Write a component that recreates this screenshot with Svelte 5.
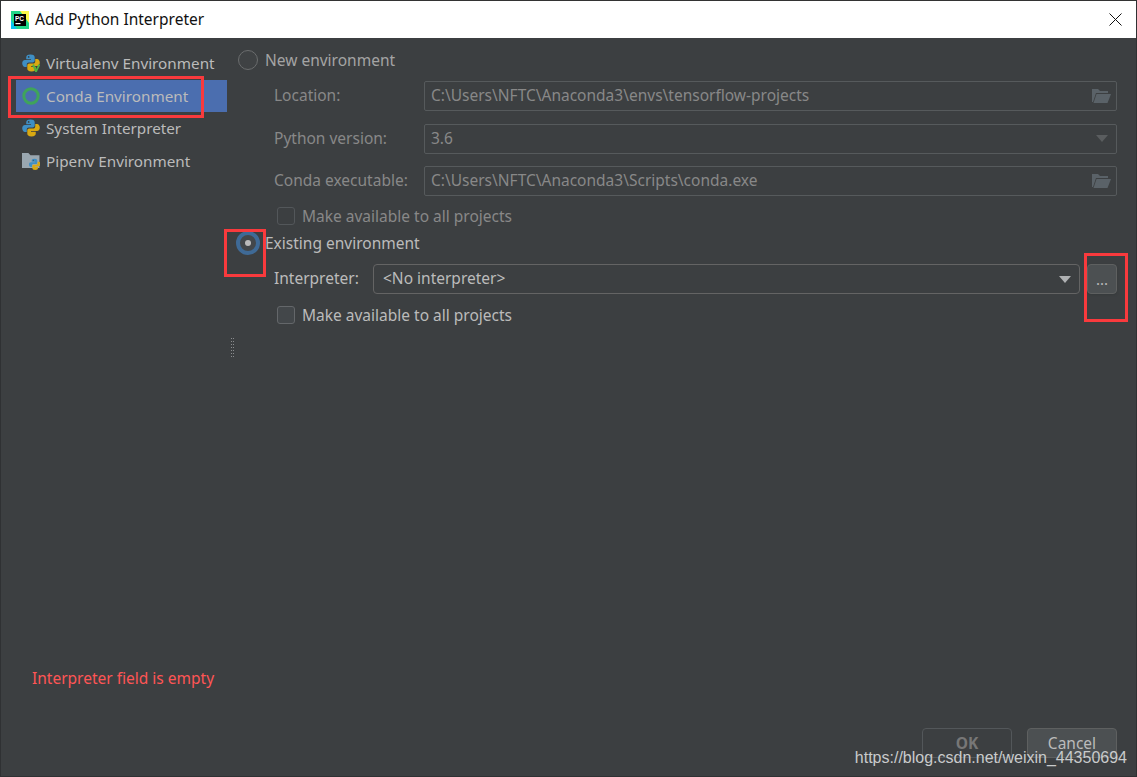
<script>
  const envs = [
    { name: 'Virtualenv Environment', icon: 'venv' },
    { name: 'Conda Environment', icon: 'conda' },
    { name: 'System Interpreter', icon: 'python' },
    { name: 'Pipenv Environment', icon: 'pipenv' }
  ];
  const fields = [
    { label: 'Location:', value: 'C:\\Users\\NFTC\\Anaconda3\\envs\\tensorflow-projects', kind: 'folder' },
    { label: 'Python version:', value: '3.6', kind: 'select' },
    { label: 'Conda executable:', value: 'C:\\Users\\NFTC\\Anaconda3\\Scripts\\conda.exe', kind: 'folder' }
  ];
</script>

{#snippet snake()}
  <path d="M8 .5C5 .5 4 1.7 4 3.3V5H8.5V5.7H2.8C1.2 5.7 .2 7 .2 8.7S1.2 12.2 2.8 12.2H4.5V10C4.5 8.8 5.3 8 6.5 8H10C11.2 8 12 7.2 12 6.2V3.3C12 1.7 11 .5 8 .5Z" fill="#3f8fc4" />
  <path d="M9 16.5C12 16.5 13 15.3 13 13.7V12H8.5V11.3H14.2C15.8 11.3 16.8 10 16.8 8.3S15.8 4.8 14.2 4.8H12.5V7C12.5 8.2 11.7 9 10.5 9H7C5.8 9 5 9.8 5 10.8V13.7C5 15.3 6 16.5 9 16.5Z" fill="#d9a912" />
  <circle cx="6.3" cy="2.8" r=".8" fill="#3c3f41" />
{/snippet}

<div class="window">
  <header class="titlebar">
    <svg class="logo" width="18" height="18" viewBox="0 0 18 18">
      <rect width="18" height="18" fill="#21d789" />
      <path d="M9 0H18V12Z" fill="#fcf84a" />
      <path d="M0 9L6 18H0Z" fill="#07c3f2" />
      <rect x="3" y="3" width="12" height="12" fill="#000" />
      <rect x="4.5" y="12" width="5" height="1.2" fill="#fff" />
      <text x="4" y="9.6" class="logo-text">PC</text>
    </svg>
    <span class="title">Add Python Interpreter</span>
    <svg class="close" width="13" height="13" viewBox="0 0 13 13">
      <path d="M.5 .5L12.5 12.5M12.5 .5L.5 12.5" stroke="#111" stroke-width="1" fill="none" />
    </svg>
  </header>

  <div class="content">
    <div class="columns">
      <nav class="sidebar">
        {#each envs as env}
          <div class="env" class:selected={env.icon === 'conda'}>
            <svg class="env-icon" width="18" height="18" viewBox="0 0 17 17">
              {#if env.icon === 'conda'}
                <circle cx="8.5" cy="8.5" r="6.8" fill="none" stroke="#3fa45b" stroke-width="2.8" />
              {:else if env.icon === 'pipenv'}
                <path d="M0 1H6L8 3H16.5V15H0Z" fill="#9aa7b0" />
                <g transform="translate(6.5 6) scale(.66)">{@render snake()}</g>
              {:else}
                {@render snake()}
                {#if env.icon === 'venv'}
                  <path d="M10.5 10L13.2 16.5L16.4 10" fill="none" stroke="#4fb33f" stroke-width="1.8" />
                {/if}
              {/if}
            </svg>
            <span>{env.name}</span>
          </div>
        {/each}
      </nav>

      <main class="main">
        <div class="radio-row first">
          <span class="radio"></span>
          <span>New environment</span>
        </div>

        <div class="disabled-group">
          {#each fields as field}
            <div class="field-row">
              <span class="label text">{field.label}</span>
              <div class="input">
                <span class="text">{field.value}</span>
                {#if field.kind === 'folder'}
                  <svg width="19" height="16" viewBox="0 0 19 16">
                    <path d="M0 1H6L8 3H16V5H4L1 14H0Z" fill="#5a6268" />
                    <path d="M4.5 6H19L15.5 15H1.5Z" fill="#5a6268" />
                  </svg>
                {:else}
                  <svg class="caret" width="12" height="7" viewBox="0 0 12 7"><path d="M0 0H12L6 7Z" fill="#5a5d5f" /></svg>
                {/if}
              </div>
            </div>
          {/each}
          <div class="check-row muted">
            <span class="check dim"></span>
            <span>Make available to all projects</span>
          </div>
        </div>

        <div class="radio-row second">
          <span class="radio on"><i></i></span>
          <span>Existing environment</span>
        </div>

        <div class="interp-row">
          <span class="interp-label text">Interpreter:</span>
          <div class="combo">
            <span class="text">&lt;No interpreter&gt;</span>
            <svg width="12" height="7" viewBox="0 0 12 7"><path d="M0 0H12L6 7Z" fill="#afb1b3" /></svg>
          </div>
          <button class="dots">...</button>
        </div>

        <div class="check-row on-row">
          <span class="check"></span>
          <span>Make available to all projects</span>
        </div>

        <div class="grip"></div>
      </main>
    </div>

    <footer class="footer">
      <div class="error">Interpreter field is empty</div>
      <div class="buttons">
        <button class="btn ok">OK</button>
        <button class="btn">Cancel</button>
      </div>
    </footer>
  </div>

  <!-- screenshot annotations -->
  <div class="mark m1"></div>
  <div class="mark m2"></div>
  <div class="mark m3"></div>
  <div class="watermark">https://blog.csdn.net/weixin_44350694</div>
</div>

<style>
  :global(body) {
    margin: 0;
    background: #3c3f41;
  }

  .window {
    position: relative;
    width: 1137px;
    height: 777px;
    overflow: hidden;
    box-sizing: border-box;
    border-top: 1px solid #333;
    border-left: 1px solid #2f3133;
    border-right: 1px solid #2f3133;
    border-bottom: 1px solid #2f3133;
    display: flex;
    flex-direction: column;
    background: #3c3f41;
    color: #bbbbbb;
    font-family: "Noto Sans", "Open Sans", sans-serif;
    font-size: 15.5px;
  }

  .text {
    padding-bottom: 2px;
  }

  .titlebar {
    height: 37px;
    flex: none;
    background: #fff;
    display: flex;
    align-items: center;
    padding: 0 14px 0 10px;
    color: #111;
  }

  .logo {
    margin-right: 6px;
  }

  .logo-text {
    font: bold 6.5px "Liberation Sans", sans-serif;
    fill: #fff;
  }

  .title {
    flex: 1;
    padding-bottom: 2px;
  }

  .content {
    flex: 1;
    min-height: 0;
    display: flex;
    flex-direction: column;
  }

  .columns {
    flex: 1;
    display: flex;
    min-height: 0;
  }

  .sidebar {
    width: 211px;
    flex: none;
    margin-left: 15px;
    padding-top: 9px;
    font-size: 15.25px;
  }

  .env {
    height: 32.6px;
    display: flex;
    align-items: center;
    gap: 6px;
    padding-left: 6px;
    box-sizing: border-box;
  }

  .env.selected {
    background: #4b6eaf;
  }

  .main {
    position: relative;
    flex: 1;
    padding: 0 19px 0 11px;
    min-width: 0;
  }

  .radio-row {
    display: flex;
    align-items: center;
    gap: 7px;
    height: 24px;
  }

  .radio-row.first {
    margin-top: 10px;
    color: #a4a4a4;
  }

  .radio-row.second {
    margin-top: 3.5px;
  }

  .radio {
    width: 20px;
    height: 20px;
    box-sizing: border-box;
    border: 1px solid #6b6d6e;
    border-radius: 50%;
    background: #3f4244;
    flex: none;
    display: flex;
    align-items: center;
    justify-content: center;
  }

  .radio.on {
    width: 24px;
    height: 24px;
    margin: 0 -2px;
    border: 4px solid #3f6a96;
    background: #43474a;
  }

  .radio.on i {
    width: 6px;
    height: 6px;
    border-radius: 50%;
    background: #bbb;
  }

  .disabled-group {
    padding-left: 36px;
    margin-top: 9px;
    color: #888888;
  }

  .field-row {
    display: flex;
    align-items: center;
    height: 30px;
    margin-bottom: 12.5px;
  }

  .label {
    width: 150px;
    flex: none;
  }

  .input {
    flex: 1;
    height: 30px;
    box-sizing: border-box;
    border: 1px solid #565a5c;
    border-radius: 2px;
    display: flex;
    align-items: center;
    justify-content: space-between;
    padding: 0 5px 0 6px;
  }

  .caret {
    margin-right: 3px;
  }

  .check-row {
    display: flex;
    align-items: center;
    gap: 7px;
    height: 24px;
  }

  .check-row.muted {
    margin-top: -5px;
    padding-left: 3px;
  }

  .check-row.on-row {
    margin: 9px 0 0 39px;
  }

  .check {
    width: 18px;
    height: 18px;
    box-sizing: border-box;
    border: 1px solid #64676a;
    border-radius: 3px;
    background: #43474a;
    flex: none;
  }

  .check.dim {
    border-color: #53575a;
    background: #3c3f41;
  }

  .interp-row {
    display: flex;
    align-items: center;
    margin: 9px 0 0 36px;
    height: 30px;
  }

  .interp-label {
    width: 99px;
    flex: none;
  }

  .combo {
    flex: 1;
    height: 30px;
    box-sizing: border-box;
    border: 1px solid #646464;
    border-radius: 4px;
    background: #3c3f41;
    display: flex;
    align-items: center;
    justify-content: space-between;
    padding: 0 8px 0 9px;
  }

  .dots {
    width: 30px;
    height: 30px;
    margin-left: 7px;
    box-sizing: border-box;
    border: 1px solid #5e6060;
    border-radius: 4px;
    background: #4c5052;
    color: #bbb;
    font: 15px "Noto Sans", sans-serif;
    padding: 0;
    box-shadow: 0 1px 2px #33363888;
  }

  .grip {
    position: absolute;
    left: 3px;
    top: 300px;
    width: 4px;
    height: 19px;
    background: conic-gradient(#8a8c8e 25%, transparent 0) 0 0 / 2px 3px;
  }

  .footer {
    flex: none;
    box-sizing: border-box;
    height: 113px;
    margin-bottom: -1px;
    display: flex;
    justify-content: space-between;
    padding: 3px 19px 0 31px;
  }

  .error {
    color: #ff5555;
    height: 22px;
    padding-bottom: 2px;
  }

  .buttons {
    display: flex;
    align-items: flex-start;
    gap: 15px;
    padding-top: 61px;
  }

  .btn {
    width: 90px;
    height: 30px;
    box-sizing: border-box;
    border: 1px solid #5e6060;
    border-radius: 4px;
    background: #4c5052;
    color: #bbb;
    font: 15.5px "Noto Sans", sans-serif;
    padding: 0;
  }

  .btn.ok {
    background: #3c3f41;
    border-color: #53575a;
    color: #777;
    font-weight: bold;
  }

  .mark {
    position: absolute;
    box-sizing: border-box;
    border: 3px solid #f93a3d;
  }

  .m1 {
    left: 7px;
    top: 75px;
    width: 196px;
    height: 42px;
  }

  .m2 {
    left: 223px;
    top: 228px;
    width: 42px;
    height: 48px;
  }

  .m3 {
    left: 1083px;
    top: 252px;
    width: 44px;
    height: 69px;
  }

  .watermark {
    position: absolute;
    right: 9px;
    top: 748px;
    font: 16px "Liberation Sans", sans-serif;
    color: #c9cbcc;
  }
</style>
